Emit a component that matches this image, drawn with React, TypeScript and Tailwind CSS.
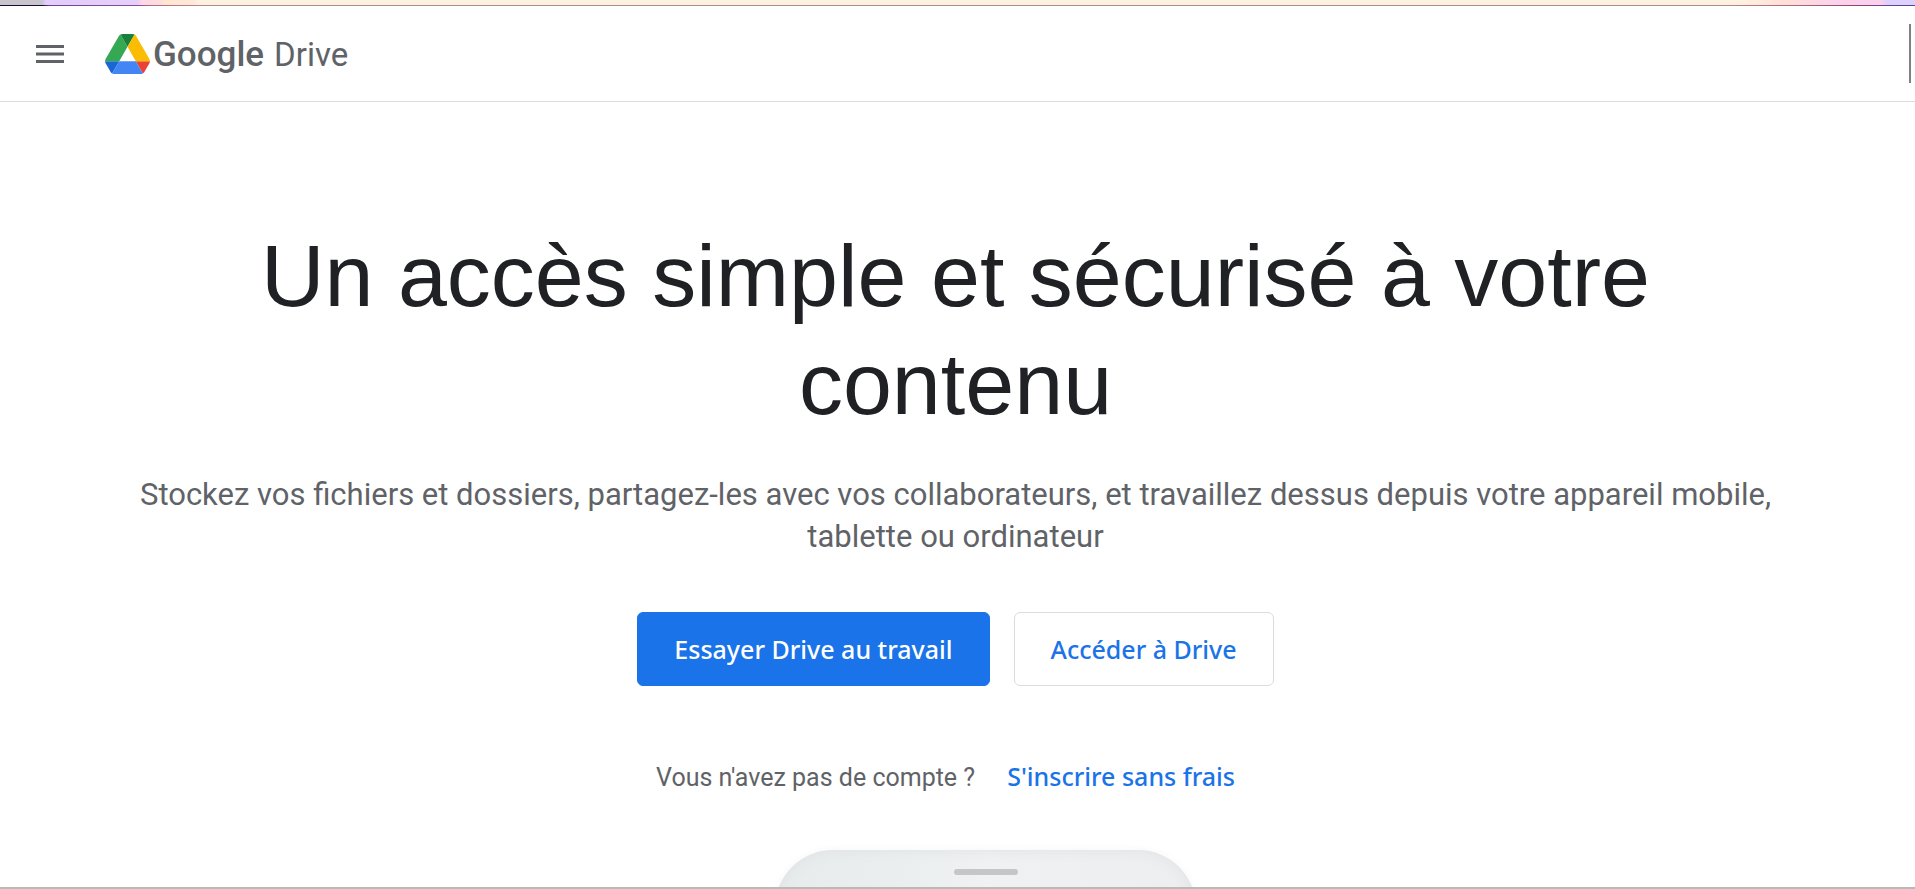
function MenuIcon() {
  return (
    <svg viewBox="0 0 28 18" className="h-[18px] w-7" fill="#5f6368" aria-hidden="true">
      <path d="M0 0h28v3H0zM0 7.5h28v3H0zM0 15h28v3H0z" />
    </svg>
  )
}

function DriveLogo() {
  return (
    <svg viewBox="0 0 87.3 78" className="h-10 w-[45px]" aria-hidden="true">
      <path d="m6.6 66.85 3.85 6.65c.8 1.4 1.95 2.5 3.3 3.3l13.75-23.8h-27.5c0 1.55.4 3.1 1.2 4.5z" fill="#1967d2" />
      <path d="m43.65 25-13.75-23.8c-1.35.8-2.5 1.9-3.3 3.3l-25.4 44a9.06 9.06 0 0 0 -1.2 4.5h27.5z" fill="#34a853" />
      <path d="m73.55 76.8c1.35-.8 2.5-1.9 3.3-3.3l1.6-2.75 7.65-13.25c.8-1.4 1.2-2.95 1.2-4.5h-27.5z" fill="#ea4335" />
      <path d="m43.65 25 13.75-23.8c-1.35-.8-2.9-1.2-4.5-1.2h-18.5c-1.6 0-3.15.45-4.5 1.2z" fill="#188038" />
      <path d="m59.8 53h-32.3l-13.75 23.8c1.35.8 2.9 1.2 4.5 1.2h50.8c1.6 0 3.15-.45 4.5-1.2z" fill="#4285f4" />
      <path d="m73.4 26.5-12.7-22c-.8-1.4-1.95-2.5-3.3-3.3l-13.75 23.8 16.15 28h27.45c0-1.55-.4-3.1-1.2-4.5z" fill="#fbbc04" />
    </svg>
  )
}

function Header() {
  return (
    <header className="flex flex-none items-center justify-between border-b border-[#dadce0] pr-1 pl-9">
      <div className="flex items-center gap-[41px]">
        <button type="button" aria-label="Menu">
          <MenuIcon />
        </button>
        <a href="#" className="flex items-center gap-[3px] font-['Roboto',sans-serif] leading-10 text-[#5f6368]">
          <DriveLogo />
          <span className="flex items-baseline gap-[10px] pt-[2px]">
            <span className="text-[35px] font-medium">Google</span>
            <span className="text-[33px]">Drive</span>
          </span>
        </a>
      </div>
      <div className="my-[18px] h-[59px] w-[2px] bg-[#808080]" />
    </header>
  )
}

function Phone() {
  return (
    <div className="mt-[54px] pl-15">
      <div className="flex h-96 w-[421px] justify-center rounded-[58px] bg-linear-to-r from-[#e6ebeb] via-[#eff1f3] to-[#eceeef] pt-[19px] shadow-[inset_0_0_14px_#dfe2e3,0_0_8px_#f5f6f7]">
        <div className="h-[6px] w-16 rounded-full bg-[#c4c6c8]" />
      </div>
    </div>
  )
}

export default function App() {
  return (
    <div className="flex h-screen flex-col overflow-hidden border-b-2 border-[#b9b9b9] bg-white">
      <div className="h-[5px] flex-none bg-[linear-gradient(90deg,#c8c5cf_2.2%,#e2cdfb_2.4%,#e5cffa_7.2%,#fdd9e5_7.4%,#fddbe0_8.3%,#ffe6d3_8.6%,#ffe8d8_10.1%,#fff1e2_10.4%,#fff1e2_91%,#ffe0d8_93%,#fbd2ea_96%,#fad0ee_98.2%,#dcd0fc_98.6%)]" />
      <div className="h-px flex-none bg-[linear-gradient(90deg,#150f2c_2.2%,#6a4590_2.6%,#8b4f9c_7.2%,#b0707f_8%,#b58a80_10.4%,#b58a80_90%,#a56a78_94%,#92407c_97%,#5b4495_99%)]" />
      <Header />
      <main className="flex min-h-0 flex-1 flex-col items-center overflow-hidden pt-[120px] pr-1 font-['Roboto',sans-serif] text-[#5f6368]">
        <h1 className="px-32 text-center font-['Liberation_Sans',Arial,sans-serif] text-[88px] leading-[108px] text-[#202124]">
          Un accès simple et sécurisé à votre contenu
        </h1>
        <p className="mt-9 px-32 text-center text-[31px] leading-[42px]">
          Stockez vos fichiers et dossiers, partagez-les avec vos collaborateurs, et travaillez dessus depuis votre
          appareil mobile, tablette ou ordinateur
        </p>
        <div className="mt-[54px] flex gap-6 font-['Noto_Sans',sans-serif] text-[25px] leading-9 font-medium">
          <a href="#" className="rounded-md border border-[#1a73e8] bg-[#1a73e8] px-9 py-[18px] text-white">
            Essayer Drive au travail
          </a>
          <a href="#" className="rounded-md border border-[#dadce0] px-9 py-[18px] text-[#1a73e8]">
            Accéder à Drive
          </a>
        </div>
        <div className="mt-[72px] flex items-baseline gap-3 text-[25px] leading-9">
          <p>Vous n'avez pas de compte ?</p>
          <a href="#" className="px-5 font-['Noto_Sans',sans-serif] font-medium text-[#1a73e8]">
            S'inscrire sans frais
          </a>
        </div>
        <Phone />
      </main>
    </div>
  )
}
